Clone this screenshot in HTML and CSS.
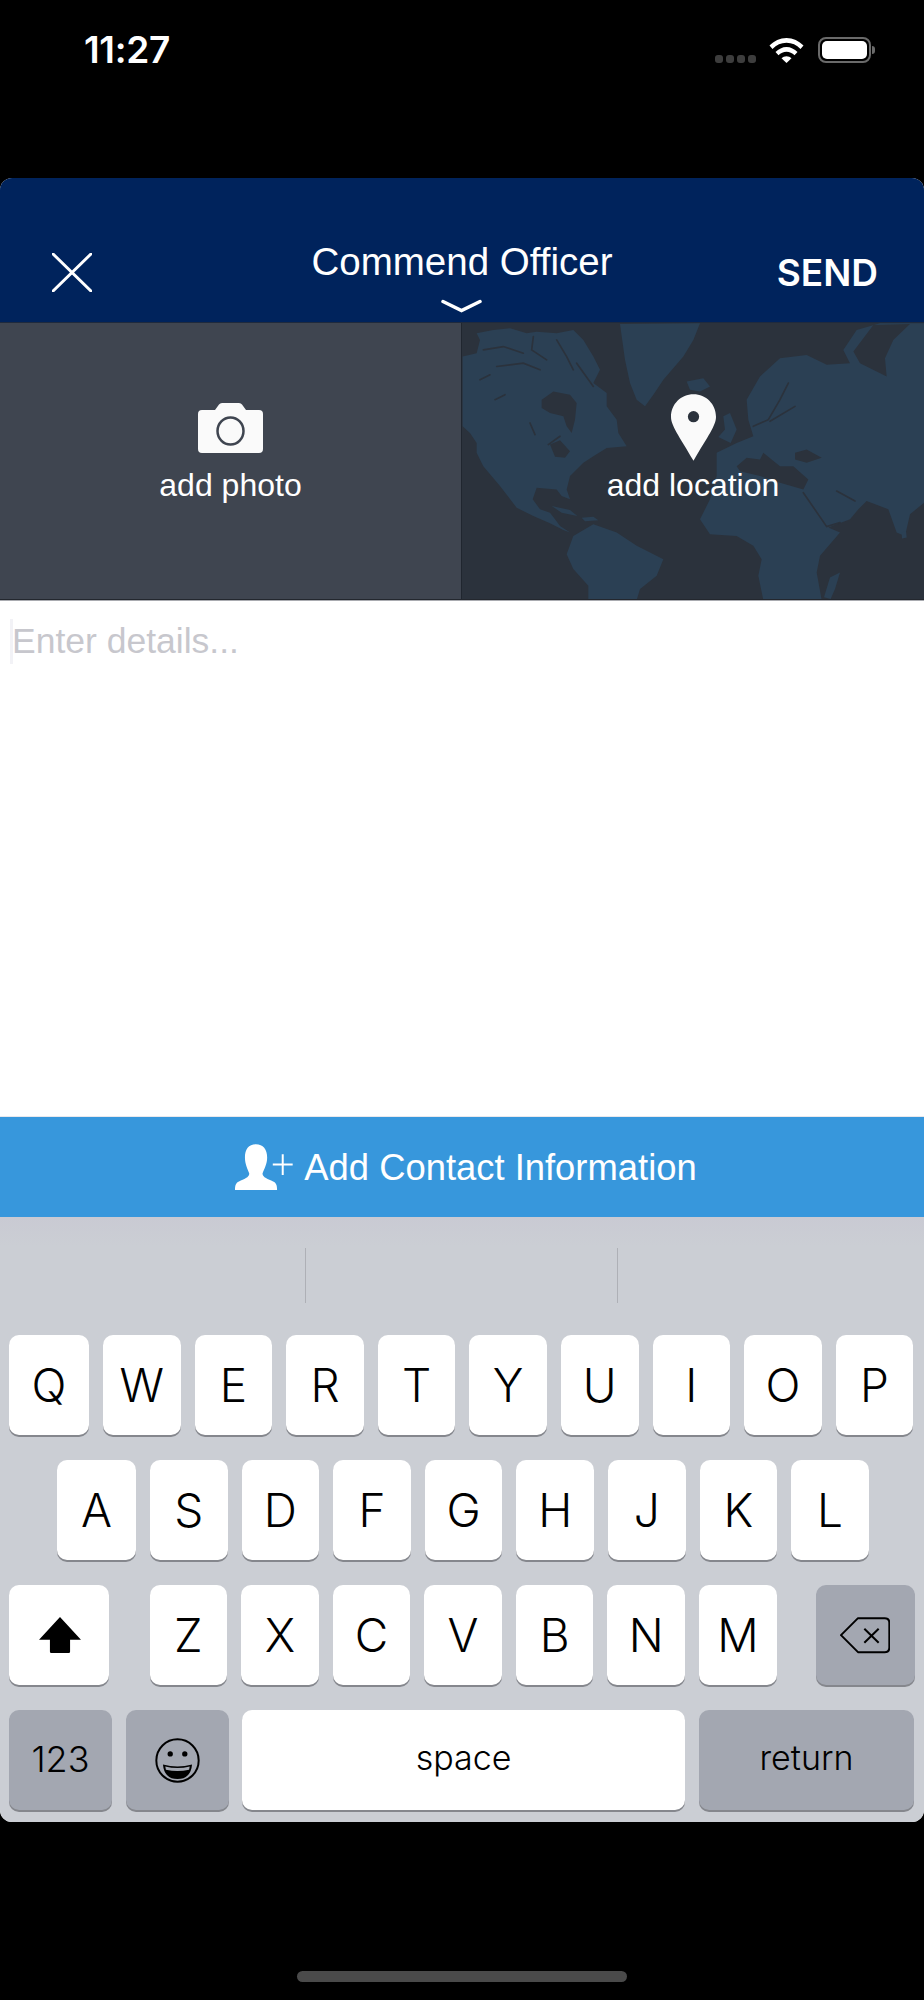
FILE: index.html
```html
<!DOCTYPE html>
<html lang="en">
<head>
<meta charset="utf-8">
<title>Commend Officer</title>
<link rel="stylesheet" href="styles.css">
</head>
<body>
<div class="screen">
  <div class="status">
    <span class="time">11:27</span>
    <div class="status-icons">
      <div class="signal"><i></i><i></i><i></i><i></i></div>
      <svg class="wifi" viewBox="0 0 35 26"><path d="M0.5 8.5C5 4 11 1 17.5 1S30 4 34.5 8.5L31.5 12C27.5 8 23 5.8 17.5 5.8S7.5 8 3.5 12Z"/><path d="M6.5 15C9.5 12 13.5 10 17.5 10S25.5 12 28.5 15L25.5 18.3C23.3 16.2 20.5 14.8 17.5 14.8S11.7 16.2 9.5 18.3Z"/><path d="M12.5 21.3C13.8 20 15.6 19.2 17.5 19.2S21.2 20 22.5 21.3L17.5 26Z"/></svg>
      <div class="battery"><div class="battery-fill"></div></div>
      <div class="battery-nub"></div>
    </div>
  </div>

  <div class="sheet">
    <header class="topbar">
      <svg class="close" viewBox="0 0 40 39"><path d="M1 1L39 38M39 1L1 38"/></svg>
      <div class="title-wrap">
        <div class="title">Commend Officer</div>
        <svg class="chevron" viewBox="0 0 41 14"><path d="M2 2.5L20.5 11.5L39 2.5"/></svg>
      </div>
      <div class="send">SEND</div>
    </header>

    <div class="media">
      <div class="media-cell photo">
        <svg class="camera" viewBox="0 0 65 50"><path class="cam-body" d="M4 7H17L21 1.500Q22 0 24 0H41Q43 0 44 1.500L48 7H61Q65 7 65 11V46Q65 50 61 50H4Q0 50 0 46V11Q0 7 4 7Z"/><ellipse class="cam-lens" cx="32.500" cy="28" rx="13" ry="13.500"/></svg>
        <div class="media-label">add photo</div>
      </div>
      <div class="media-cell location">
        <svg class="map" viewBox="6 9 1386 831" preserveAspectRatio="none">
          <g class="land">
            <path d="M8 110L50 100 60 60 50 40 100 30 150 25 200 40 230 35 290 40 340 30 370 60 400 110 420 150 400 190 440 220 440 260 470 300 475 340 500 380 440 385 400 410 370 430 330 470 320 510 330 540 305 530 290 510 230 505 218 540 240 570 270 580 285 600 300 620 330 640 310 632 270 612 220 590 170 565 120 500 70 440 50 400 50 370 30 340 8 320Z"/>
            <path d="M480 12L720 10 700 60 670 110 610 180 580 225 555 260 530 240 510 190 495 120Z"/>
            <path d="M680 185L730 175 750 200 720 215 690 210Z"/>
            <path d="M790 290L810 280 830 330 812 370 775 352 795 330Z"/>
            <path d="M860 240L900 170 960 115 1040 105 1100 135 1170 130 1150 90 1190 30 1260 10 1392 10V550L1350 585 1335 650 1310 640 1285 570 1220 545 1195 570 1170 600 1105 625 1140 640 1080 710 1070 760 1085 843H910L895 770 905 720 880 680 830 650 750 645 720 600 750 540 770 470 770 400 830 370 880 350 865 300Z"/>
            <path d="M320 705L340 650 400 615 470 640 530 680 610 720 590 770 540 810 530 843H385V800L340 750Z"/>
            <path d="M1110 775L1140 760 1125 810 1112 840 1092 835Z"/>
            <path d="M1325 640L1338 635 1340 655 1326 658Z"/>
            <path d="M275 560L330 572 352 590 305 580ZM365 595L400 592 415 603 375 606Z"/>
          </g>
          <g class="sea">
            <path d="M245 240L280 215 330 225 350 250 345 300 335 340 320 320 310 290 270 280 245 265Z"/>
            <path d="M270 375L300 362 330 395 315 415 285 412Z"/>
            <path d="M830 440L860 415 900 420 910 400 960 440 1000 440 1045 480 1030 510 960 490 900 470 840 455Z"/>
            <path d="M1005 400L1040 390 1085 415 1040 430 1005 420Z"/>
            <path d="M1180 95L1240 15 1350 12 1300 60 1275 115 1280 170 1200 130Z"/>
          </g>
          <g class="sea-line">
            <path d="M1030 520L1100 622 1140 610"/>
            <path d="M880 320L925 300 960 240 985 190"/>
            <path d="M930 305L1005 260"/>
            <path d="M60 180L90 165M105 240L135 225M210 310L225 345M265 375L300 350"/>
            <path d="M1130 515L1185 545"/>
            <path d="M70 90L130 80 190 100M110 140L190 130 240 150M220 50L215 90 260 120M290 60L320 110 340 150M350 130L400 200"/>
          </g>
        </svg>
        <svg class="pin" viewBox="0 0 136 201"><path d="M68 0C106 0 136 30 136 68C136 95 112 125 68 201C24 125 0 95 0 68C0 30 30 0 68 0Z"/><circle class="pin-hole" cx="68" cy="68" r="17"/></svg>
        <div class="media-label">add location</div>
      </div>
    </div>

    <div class="details">
      <div class="caret"></div>
      <div class="placeholder">Enter details...</div>
    </div>

    <div class="contact">
      <svg class="contact-icon" viewBox="0 0 175 140"><path d="M63 0C85 0 97 15 97 40C97 60 88 75 83 88C83 100 100 105 115 112C125 116 127 125 127 138H0C0 125 2 116 12 112C27 105 43 100 43 88C38 75 30 60 30 40C30 15 41 0 63 0Z"/><path class="plus" d="M114 61H174M144 30V93"/></svg>
      <span>Add Contact Information</span>
    </div>

    <div class="keyboard">
      <div class="suggestions"><div class="sugg one"></div><div class="sugg two"></div></div>
      <div class="rows">
        <div class="row r1">
          <div class="key edge">Q</div><div class="key">W</div><div class="key">E</div><div class="key">R</div><div class="key">T</div><div class="key">Y</div><div class="key">U</div><div class="key">I</div><div class="key">O</div><div class="key">P</div>
        </div>
        <div class="row r2">
          <div class="key edge-a">A</div><div class="key">S</div><div class="key">D</div><div class="key">F</div><div class="key">G</div><div class="key">H</div><div class="key">J</div><div class="key">K</div><div class="key">L</div>
        </div>
        <div class="row r3">
          <div class="key shift"><svg class="shift-icon" viewBox="0 0 127 109"><path d="M63.500 0L127 69H94V105Q94 109 90 109H37Q33 109 33 105V69H0Z"/></svg></div>
          <div class="key">Z</div><div class="key">X</div><div class="key">C</div><div class="key">V</div><div class="key">B</div><div class="key">N</div><div class="key">M</div>
          <div class="key dark del"><svg class="del-icon" viewBox="0 0 150 110"><path d="M3 54L54 3H134Q148 3 148 17V91Q148 105 134 105H54Z"/><path d="M73 35L116 77M116 35L73 77"/></svg></div>
        </div>
        <div class="row r4">
          <div class="key dark digits">123</div>
          <div class="key dark emoji"><svg class="emoji-icon" viewBox="0 0 136 136"><circle class="face" cx="68" cy="68" r="64"/><circle cx="46" cy="48" r="8"/><circle cx="90" cy="48" r="8"/><path d="M24 80Q68 92 112 80Q108 124 68 124Q28 124 24 80Z"/><path class="teeth" d="M31 86Q68 96 105 86L103 96Q68 104 33 96Z"/></svg></div>
          <div class="key word spacebar">space</div>
          <div class="key dark word return">return</div>
        </div>
      </div>
    </div>
  </div>

  <div class="home-area"><div class="home-bar"></div></div>
</div>
</body>
</html>
```

FILE: styles.css
```css
* { box-sizing: border-box; }
html, body { margin: 0; padding: 0; background: #000; }
.screen { width: 924px; height: 2000px; background: #000; font-family: "Liberation Sans", Arial, sans-serif; display: flex; flex-direction: column; }

.status { height: 178px; display: flex; justify-content: space-between; align-items: flex-start; padding: 31px 49px 0 84px; color: #fff; }
.time { font: 600 37px/38px Inter, "Liberation Sans", sans-serif; letter-spacing: -0.3px; }
.status-icons { display: flex; align-items: flex-start; padding-top: 6px; }
.signal { display: flex; gap: 3px; margin-top: 18px; margin-right: 13px; }
.signal i { width: 8px; height: 8px; border-radius: 3px; background: #3d3d3d; }
.wifi { width: 35px; height: 26px; fill: #fff; margin-right: 14px; }
.battery { width: 53px; height: 26px; border: 2px solid #6a6a6a; border-radius: 8px; padding: 2px; }
.battery-fill { width: 100%; height: 100%; background: #fff; border-radius: 5px; }
.battery-nub { width: 3px; height: 8px; margin: 9px 0 0 1px; background: #6a6a6a; border-radius: 0 3px 3px 0; }

.sheet { height: 1644px; border-radius: 12px; overflow: hidden; background: #fff; display: flex; flex-direction: column; }

.topbar { height: 145px; flex: none; background: #00235c; border-bottom: 1px solid #1f2a3d; display: grid; grid-template-columns: 1fr auto 1fr; align-items: start; padding: 0 46px; color: #fff; }
.close { width: 40px; height: 39px; margin: 75px 0 0 6px; fill: none; stroke: #fff; stroke-width: 3; stroke-linecap: round; }
.title-wrap { display: flex; flex-direction: column; align-items: center; padding-top: 62px; }
.title { font-size: 38.500px; line-height: 44px; }
.chevron { width: 41px; height: 14px; margin-top: 15px; fill: none; stroke: #fff; stroke-width: 3.5; stroke-linecap: round; }
.send { justify-self: end; font: 600 37px/40px Inter, "Liberation Sans", sans-serif; margin-top: 75px; }

.media { height: 277px; flex: none; display: flex; border-bottom: 1px solid #23272e; }
.media-cell { position: relative; display: flex; flex-direction: column; align-items: center; color: #fff; }
.photo { width: 461px; background: #3f4550; padding-top: 80px; }
.location { width: 463px; background: #2b323c; border-left: 1px solid #20262f; padding-top: 71px; overflow: hidden; }
.map { position: absolute; inset: 0; width: 100%; height: 100%; filter: blur(0.4px); }
.land { fill: #2b4054; }
.sea { fill: #2b323c; }
.sea-line { fill: none; stroke: #2b323c; stroke-width: 5; stroke-linecap: round; }
.camera { width: 65px; height: 50px; display: block; }
.cam-body { fill: #fafafa; }
.cam-lens { fill: none; stroke: #3f4550; stroke-width: 2.5; }
.pin { position: relative; width: 45px; height: 67px; display: block; fill: #fafafa; }
.pin-hole { fill: #2b323c; }
.media-label { position: relative; font-size: 32px; line-height: 36px; margin-top: 14px; }
.location .media-label { margin-top: 6px; }

.details { height: 517px; flex: none; background: #fff; border-top: 1px solid #a9abb0; border-bottom: 1px solid #e8e8ec; display: flex; padding: 18px 0 0 10px; }
.caret { width: 3px; height: 45px; background: #f2f2f6; }
.placeholder { font-size: 35.500px; line-height: 40px; color: #c7c7cd; margin: 2px 0 0 -1px; }

.contact { height: 100px; flex: none; background: #3797dc; color: #fff; display: flex; align-items: center; justify-content: center; gap: 11px; font-size: 36.400px; padding: 1px 0 0 8px; }
.contact-icon { width: 58px; height: 47px; fill: #fff; margin-top: -1px; }
.plus { fill: none; stroke: #fff; stroke-width: 6; }

.keyboard { flex: 1; background: #cbced4; }
.suggestions { height: 118px; padding: 31px 0 32px; display: flex; background: linear-gradient(#c9cad3, #cbced4 30px); }
.sugg { border-right: 1px solid #aeb0b6; }
.sugg.one { width: 306px; }
.sugg.two { width: 312px; }
.rows { display: flex; flex-direction: column; gap: 25px; }
.row { display: flex; gap: 14px; height: 100px; }
.r1 { padding-left: 9px; }
.r2 { padding-left: 57px; }
.r3, .r4 { padding-left: 9px; }
.key { width: 77.600px; height: 100px; background: #fff; border-radius: 10px; box-shadow: 0 2px 0 #85878d; display: flex; align-items: center; justify-content: center; font: 350 46px/1 Inter, "Liberation Sans", sans-serif; color: #000; }
.edge { width: 80px; }
.edge-a { width: 79px; }
.dark { background: #a3a7b1; }
.word { font-size: 34px; padding-bottom: 4px; }
.digits { width: 103px; font-size: 36px; padding-bottom: 2px; }
.shift { width: 100px; margin-right: 26.500px; }
.del { width: 99px; margin-left: 25px; }
.emoji { width: 103px; margin-right: -1px; }
.spacebar { width: 443px; }
.return { width: 215px; }
.shift-icon { width: 42px; height: 36px; margin-left: 2px; }
.del-icon { width: 50px; height: 37px; fill: none; stroke: #000; stroke-width: 6; stroke-linejoin: round; }
.emoji-icon { width: 45px; height: 45px; }
.face { fill: none; stroke: #000; stroke-width: 6; }
.teeth { fill: #a3a7b1; }

.home-area { flex: 1; position: relative; display: flex; align-items: flex-start; justify-content: center; padding-top: 149px; }
.home-bar { width: 330px; height: 11px; border-radius: 6px; background: #4a4a4a; }
```
